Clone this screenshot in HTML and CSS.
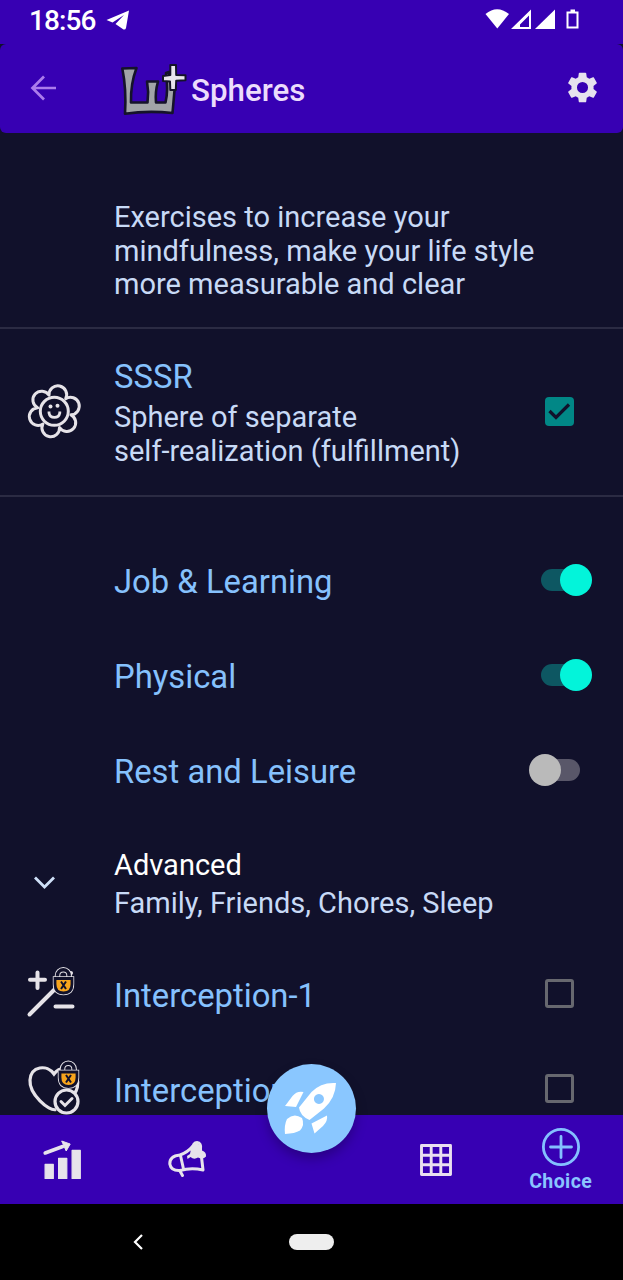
FILE: index.html
```html
<!DOCTYPE html>
<html lang="en">
<head>
<meta charset="utf-8">
<title>Spheres</title>
<link rel="stylesheet" href="styles.css">
</head>
<body>
<div class="screen">
  <div class="status">
    <span class="time">18:56</span>
    <svg class="telegram" width="24" height="22" viewBox="106 9 24 22"><path d="M129 10.500 106.500 20 112.500 22.500 124 15 115.500 24 123.500 29.500Q125.500 30 126 28Z" fill="#fff"/></svg>
    <svg class="signals" width="96" height="24" viewBox="484 8 96 24">
      <path d="M485.500 14Q497 4.500 509 14L497.300 28.500Z" fill="#fff"/>
      <path fill-rule="evenodd" d="M531 9.500V29H511ZM529 15.500 520 24.500V27H529Z" fill="#fff"/>
      <path d="M555 9.500V29H535Z" fill="#fff"/>
      <path d="M567.500 12.500H577.500V27.500H567.500ZM570.500 10.500H575" fill="none" stroke="#fff" stroke-width="2"/>
    </svg>
  </div>

  <header class="appbar">
    <svg class="back" width="28" height="28" viewBox="30 74 28 28"><path d="M56 88H33M44 76.500 32.500 88 44 99.500" fill="none" stroke="#ab7cec" stroke-width="2.700"/></svg>
    <svg class="logo" width="68" height="56" viewBox="119 62 68 56">
      <path d="M122.300 68.500 136.500 68Q130.500 84 131 102.500H147.500Q149 92 147 81.500H158Q155 92 156 102.500H165.500Q168.500 90 166 73L169 72Q170 86 174.500 90.500L172.500 113Q148 110.500 125 113.700Q126.500 89 122.300 68.500Z" fill="#a1a4a8" stroke="#15132a" stroke-width="2.600" stroke-linejoin="round"/>
      <path d="M170.300 65H176L176.200 75L185.500 75.300V80.300L176.200 80.800L175.800 90H170.300L170 81.500L163 81V76L170.300 75Z" fill="#e9e6ee" stroke="#15132a" stroke-width="2" stroke-linejoin="round"/>
    </svg>
    <h1 class="title">Spheres</h1>
    <svg class="gear" width="37" height="37" viewBox="0 0 24 24"><path fill="#e6e2ee" d="M19.140 12.940c.040-.300.060-.610.060-.940s-.020-.640-.070-.940l2.030-1.580c.180-.140.230-.410.120-.610l-1.920-3.320c-.120-.220-.370-.290-.590-.220l-2.390.960c-.500-.380-1.030-.700-1.620-.940l-.360-2.540c-.040-.240-.240-.410-.480-.410h-3.840c-.240 0-.430.170-.470.410l-.360 2.540c-.590.240-1.130.570-1.620.940l-2.390-.960c-.220-.080-.470 0-.590.220L2.740 8.870c-.120.210-.080.470.120.610l2.030 1.580c-.050.300-.090.630-.090.940s.020.640.070.940l-2.030 1.580c-.180.140-.230.410-.120.610l1.920 3.320c.120.220.370.290.590.220l2.390-.960c.500.380 1.030.700 1.620.940l.360 2.540c.050.240.240.410.480.410h3.840c.240 0 .440-.170.470-.410l.360-2.540c.590-.240 1.130-.560 1.620-.940l2.390.960c.220.080.470 0 .590-.220l1.920-3.320c.120-.220.070-.470-.120-.610l-2.010-1.580zM12 15.600A3.600 3.600 0 1 1 12 8.400a3.600 3.600 0 0 1 0 7.200z"/></svg>
  </header>

  <main class="list">
    <section class="intro"><p class="body">Exercises to increase your<br>mindfulness, make your life style<br>more measurable and clear</p></section>

    <section class="row sphere">
      <svg class="lead flower" width="56" height="58" viewBox="26 381 56 58">
        <g fill="none" stroke="#e6e3e8" stroke-width="3" stroke-linejoin="round">
          <circle cx="54.300" cy="410.300" r="14"/>
          <path d="M49.050 394.130A8.800 8.800 0 1 1 65.670 397.670A8.800 8.800 0 1 1 70.930 413.830A8.800 8.800 0 1 1 59.550 426.470A8.800 8.800 0 1 1 42.930 422.930A8.800 8.800 0 1 1 37.670 406.770A8.800 8.800 0 1 1 49.050 394.130Z"/>
        </g>
        <path d="M49 410.500v1.500a5.500 5.500 0 0 0 10.800 0v-1.500" fill="none" stroke="#e6e3e8" stroke-width="2.800"/>
        <circle cx="50.500" cy="405.500" r="2" fill="#e6e3e8"/><circle cx="57.500" cy="404.700" r="2" fill="#e6e3e8"/>
      </svg>
      <div class="text">
        <h2 class="name">SSSR</h2>
        <p class="body">Sphere of separate<br>self-realization (fulfillment)</p>
      </div>
      <span class="check on"><svg width="29" height="29" viewBox="0 0 29 29"><path d="M4.500 14 11 20.500 24 7.500" fill="none" stroke="#11112b" stroke-width="3.200"/></svg></span>
    </section>

    <section class="row item job"><h2 class="name">Job &amp; Learning</h2><span class="switch on"></span></section>
    <section class="row item"><h2 class="name">Physical</h2><span class="switch on"></span></section>
    <section class="row item"><h2 class="name">Rest and Leisure</h2><span class="switch"></span></section>

    <section class="row advanced">
      <svg class="lead chevron" width="24" height="16" viewBox="32 874 24 16"><path d="M35 877.500 44.500 887 54 877.500" fill="none" stroke="#cfe0f8" stroke-width="2.800"/></svg>
      <div class="text">
        <h3 class="sub">Advanced</h3>
        <p class="body">Family, Friends, Chores, Sleep</p>
      </div>
    </section>

    <section class="row item">
      <svg class="lead plusminus" width="52" height="56" viewBox="26 964 52 56">
        <path d="M30 979.800H45M37.500 972.500V988M29.500 1014.500 71 973M55.500 1006.500H72.500" fill="none" stroke="#e6e3e8" stroke-width="4" stroke-linecap="round"/>
        <g id="lock">
          <path d="M57.500 980V975.500a5.800 5.800 0 0 1 11.600 0V980" fill="#11112b" stroke="#e6e3e8" stroke-width="5.500"/>
          <path d="M57.500 980V975.500a5.800 5.800 0 0 1 11.600 0V980" fill="none" stroke="#11112b" stroke-width="3.600"/>
          <path d="M55 978.500H72V984Q72 993 63.500 993Q55 993 55 984Z" fill="#f8a51c" stroke="#e6e3e8" stroke-width="4.400"/>
          <path d="M55 978.500H72V984Q72 993 63.500 993Q55 993 55 984Z" fill="#f8a51c" stroke="#11112b" stroke-width="2.800"/>
          <path d="M61 981.500 66 989M66 981.500 61 989" stroke="#11112b" stroke-width="2"/>
        </g>
      </svg>
      <h2 class="name">Interception-1</h2><span class="check"></span>
    </section>
    <section class="row item">
      <svg class="lead heart" width="56" height="58" viewBox="26 1058 56 58">
        <path d="M56 1109.500C49 1112 29 1094 30 1080C31 1066 47 1064 54 1074C60 1066 73 1066 77 1078C79 1084 77 1091 74 1094" fill="none" stroke="#e6e3e8" stroke-width="3.200"/>
        <circle cx="66.500" cy="1101.500" r="11.500" fill="#11112b" stroke="#e6e3e8" stroke-width="3.200"/>
        <path d="M61 1101.500 65 1105.500 72 1098.500" fill="none" stroke="#e6e3e8" stroke-width="3" stroke-linecap="round"/>
        <use href="#lock" x="5" y="93.500"/>
      </svg>
      <h2 class="name">Interception-2</h2><span class="check"></span>
    </section>
  </main>

  <nav class="tabs">
    <span class="tab"><svg width="42" height="42" viewBox="41.300 1139 42 42">
      <path d="M45.400 1164.400h8.200v14h-8.200zM58.900 1158.400h8.200v20h-8.200zM72.400 1150.400h8.200v28h-8.200z" fill="#e7e3eb" stroke="#e7e3eb" stroke-linejoin="round" stroke-width="1.200"/>
      <path d="M45.500 1153 63 1146.500" stroke="#e7e3eb" stroke-width="3.600" stroke-linecap="round"/><path d="M62 1141 70.500 1144 66.500 1151Z" fill="#e7e3eb" stroke="#e7e3eb" stroke-linejoin="round"/></svg></span>
    <span class="tab"><svg width="42" height="42" viewBox="166 1139 42 42">
      <g fill="none" stroke="#e7e3eb" stroke-width="3" stroke-linejoin="round" stroke-linecap="round"><path d="M180 1155Q169.500 1156 169.800 1164Q171 1171 180 1170.500Q191 1167.500 203 1170L201.500 1157M180 1155Q188 1152 192.500 1146.500M180.500 1155.500 183.500 1169M180 1171 182.500 1175.500"/><path d="M192 1150Q193 1142.500 197 1142.500Q201.500 1143 200.500 1149"/></g>
      <path d="M191 1149Q194 1142 199.500 1144.500Q202.500 1147 202 1150.500Q206.500 1152 206 1156.500Q203 1160 198 1157.500Q194 1160 190.500 1157L187.500 1159 187 1156 190 1154Z" fill="#e7e3eb"/></svg></span>
    <button class="fab" aria-label="Start"><svg width="56" height="56" viewBox="283 1081 56 56">
      <path fill-rule="evenodd" d="M336 1084Q321 1083 311.500 1093L299 1108.500Q300 1117 309.500 1121L324 1109.500Q335.500 1099 336 1084ZM319 1095a5 5 0 1 1-.1 0Z" fill="#fff"/>
      <path d="M303.500 1093Q297 1091.500 292.500 1097L285 1107 296 1108ZM327 1116.500Q328 1122 323 1127L314.500 1134.500 311.500 1124.500ZM285 1135Q284 1126 287 1120Q294 1113.500 302 1119Q305 1126 300 1131.500Q295 1134.500 285 1135Z" fill="#fff"/></svg></button>
    <span class="tab"><svg width="34" height="34" viewBox="0 0 34 34"><path d="M2.500 2.500h29v29h-29zM12.200 2.500v29M21.800 2.500v29M2.500 12.200h29M2.500 21.800h29" fill="none" stroke="#eadff0" stroke-width="2.900" stroke-linejoin="round"/></svg></span>
    <span class="tab choice"><svg width="40" height="40" viewBox="0 0 40 40"><path d="M20 9.500v21M9.500 20h21" stroke="#84c0ff" stroke-width="2.800" stroke-linecap="round"/><circle cx="20" cy="20" r="17.600" fill="none" stroke="#84c0ff" stroke-width="2.800"/></svg><b>Choice</b></span>
  </nav>

  <footer class="system">
    <svg class="sysback" width="12" height="18" viewBox="0 0 12 18"><path d="M10 2 3 9l7 7" fill="none" stroke="#fff" stroke-width="2.200"/></svg>
    <span class="home"></span>
  </footer>
</div>
</body>
</html>
```

FILE: styles.css
```css
* { box-sizing: border-box; }
body { margin: 0; background: #11112b; font-family: Roboto, sans-serif; }
h1, h2, h3, p { margin: 0; font-weight: 400; }
svg { display: block; flex: none; }
.screen { width: 623px; height: 1280px; display: flex; flex-direction: column; background: #11112b; overflow: hidden; }

.status { height: 44px; flex: none; display: flex; align-items: flex-start; padding: 0 43px 0 29px; background: #3700b3; }
.time { width: 77px; margin-top: 5px; line-height: 32px; font-size: 28px; font-weight: 500; letter-spacing: -.9px; color: #fff; white-space: nowrap; }
.telegram { margin-top: 9px; }
.signals { margin: 8px 0 0 auto; }

.appbar { height: 89px; flex: none; display: flex; align-items: center; padding: 0 22px 2px 30px; background: #3700b3; border-radius: 6px; }
.logo { margin: 5px 0 0 61px; }
.title { margin: 6px 0 0 4px; font-size: 31.300px; font-weight: 500; color: #ecdcfc; }
.gear { margin-left: auto; }

.list { height: 982px; flex: none; overflow: hidden; }
.body { font-size: 29px; line-height: 33.500px; color: #c8daf6; white-space: nowrap; }
.name { font-size: 32.800px; line-height: 38px; color: #86c1fd; white-space: nowrap; }
.intro { height: 196px; padding: 68px 0 0 114px; border-bottom: 2px solid #2b2b43; }
.row { display: grid; grid-template-columns: 114px 1fr auto; align-items: center; }
.row > .name, .row > .text { grid-column: 2; }
.lead { grid-column: 1; grid-row: 1; margin-left: 26px; }
.flower { margin-top: -3px; }
.chevron { margin-left: 32px; }
.sphere { height: 168px; border-bottom: 2px solid #2b2b43; }
.sphere .text { padding-top: 2px; }
.sphere .check { margin-top: -1px; }
.sphere .name { margin-bottom: 5px; }
.item { height: 95px; padding-top: 5px; }
.item > .check, .item > .switch { margin-top: -5px; }
.item > .lead { margin-top: -8px; }
.job { margin-top: 35px; }
.advanced { height: 129px; }
.advanced .text { padding-top: 5px; }
.sub { font-size: 29px; line-height: 34px; margin-bottom: 5px; color: #fff; }

.check { width: 29px; height: 29px; margin-right: 49px; border: 3px solid #67686f; border-radius: 3px; }
.check.on { border: 0; background: #018786; border-radius: 4px; }
.switch { width: 51px; height: 32px; margin-right: 43px; display: flex; align-items: center; position: relative; }
.switch::before { content: ""; position: absolute; left: 6px; right: 0; top: 5px; height: 22px; border-radius: 11px; background: #595769; }
.switch::after { content: ""; position: relative; width: 32px; height: 32px; border-radius: 50%; background: #bababa; }
.switch.on { margin-right: 31px; justify-content: flex-end; }
.switch.on::before { left: 0; right: 6px; background: #0d5762; }
.switch.on::after { background: #03f4da; }

.tabs { height: 89px; flex: none; display: grid; grid-template-columns: repeat(5, 124.600px); align-items: center; justify-items: center; background: #3700b3; }
.fab { width: 89px; height: 89px; padding: 0; border: 0; border-radius: 50%; margin-top: -103px; display: grid; place-items: center; background: #8ac7ff; box-shadow: 0 6px 12px rgba(0, 0, 0, .25); }
.choice { display: flex; flex-direction: column; align-items: center; color: #8ac4ff; }
.choice b { margin-top: 4px; font-size: 19.500px; line-height: 22px; letter-spacing: .4px; }

.system { height: 76px; flex: none; display: flex; align-items: center; padding-left: 132px; background: #000; }
.home { width: 45px; height: 16px; margin-left: 145px; border-radius: 8px; background: #eee; }
```
